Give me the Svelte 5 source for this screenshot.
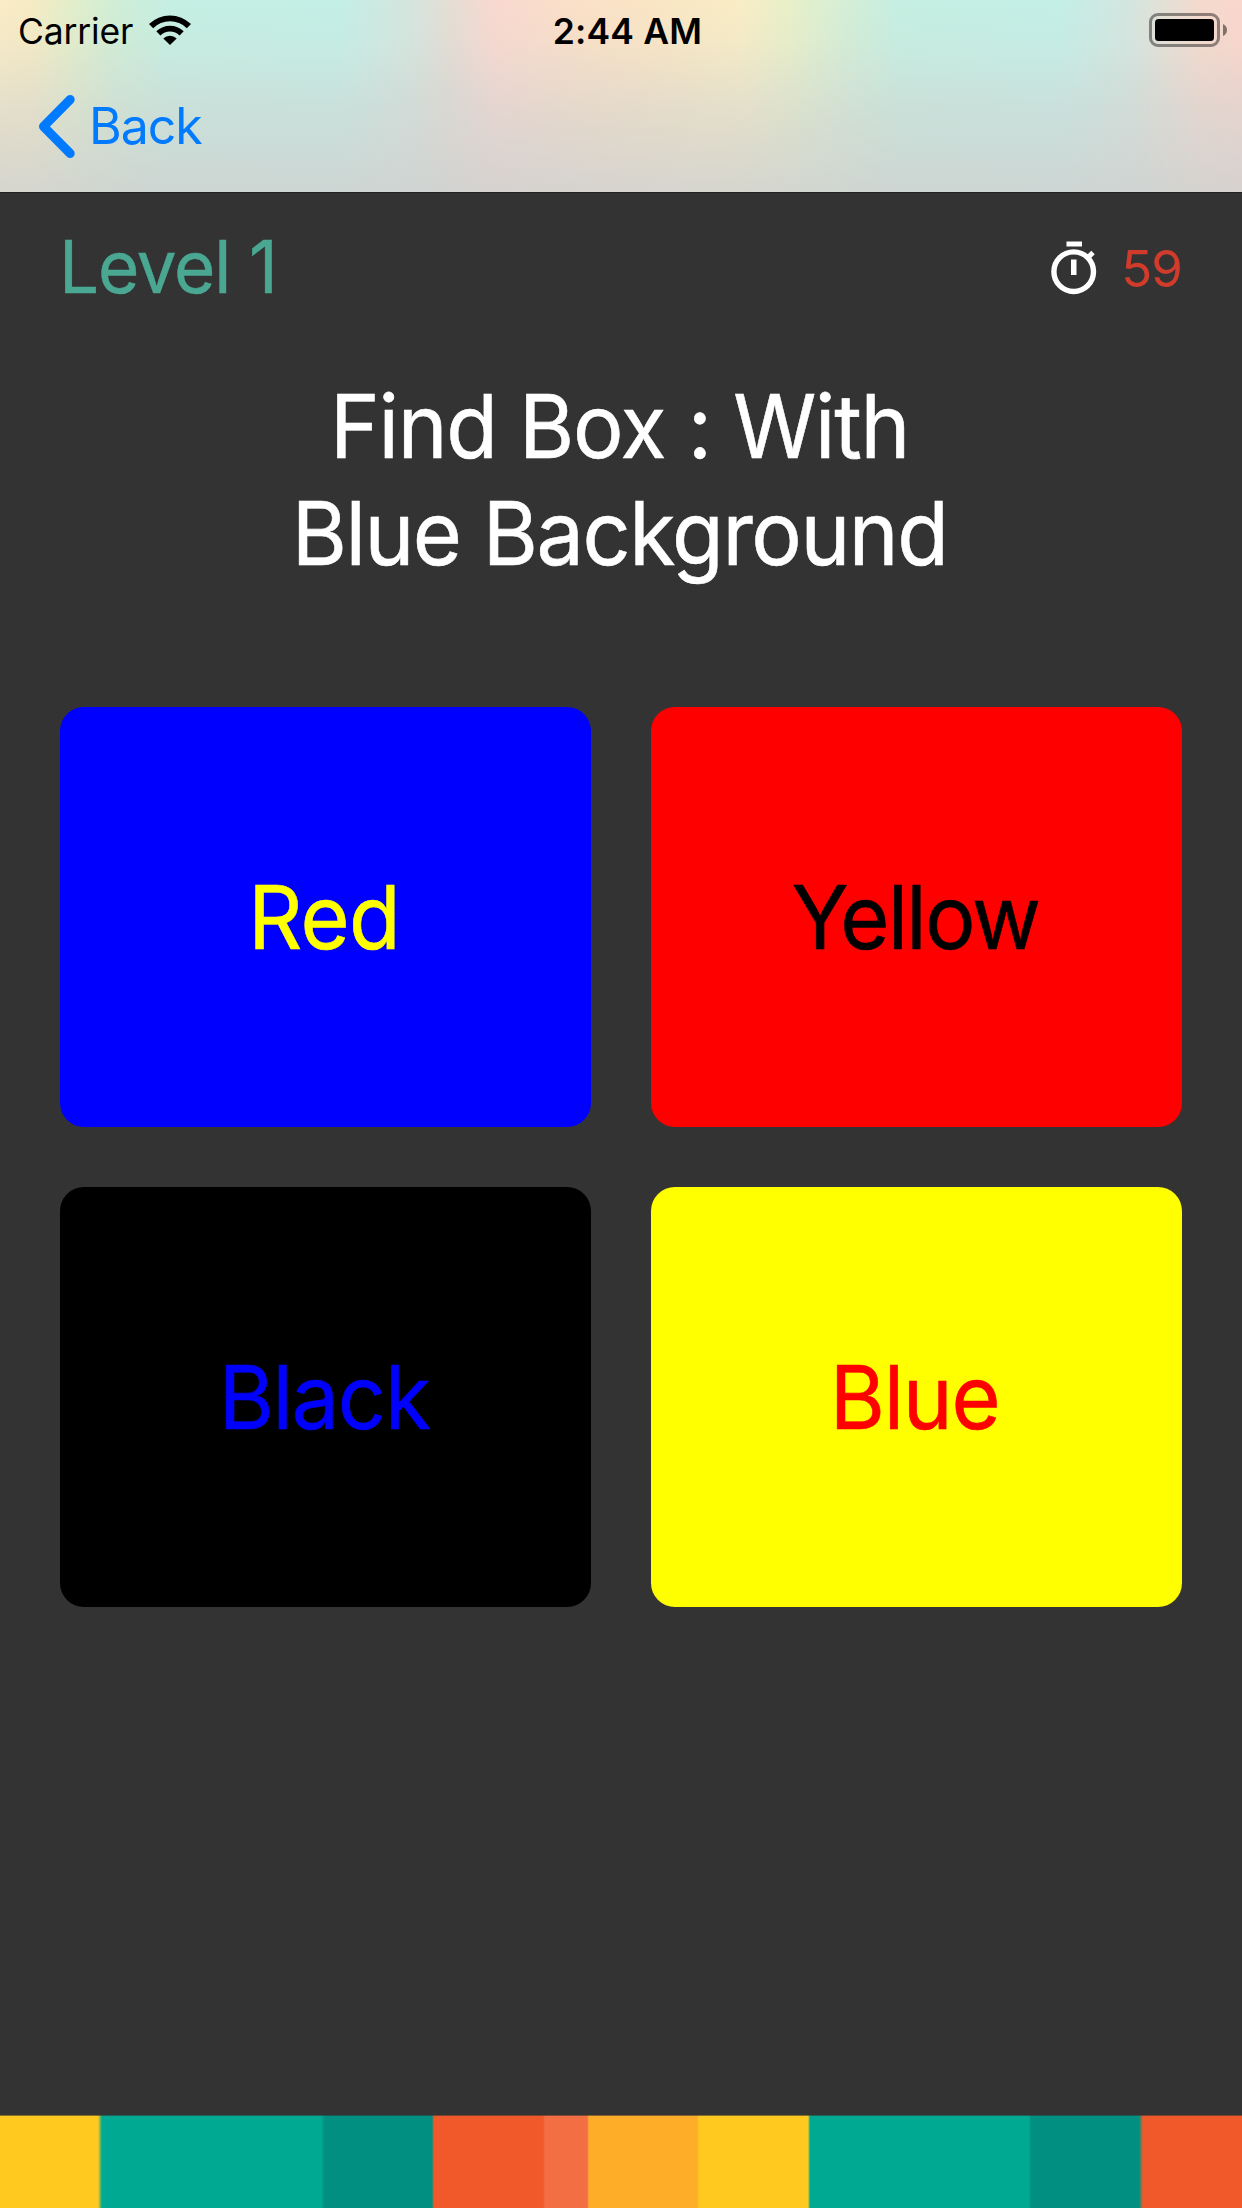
<script>
  const cards = [
    { label: 'Red', tone: 'on-blue' },
    { label: 'Yellow', tone: 'on-red' },
    { label: 'Black', tone: 'on-black' },
    { label: 'Blue', tone: 'on-yellow' },
  ];
</script>

<div class="screen">
  <header>
    <div class="status">
      <div class="carrier">
        <span class="carrier-name">Carrier</span>
        <svg class="wifi" width="42" height="30" viewBox="0 0 42 30">
          <path d="M0 9 A30 30 0 0 1 42 9 L37.8 13.2 A24 24 0 0 0 4.2 13.2 Z" />
          <path d="M7.3 16.3 A19.5 19.5 0 0 1 34.7 16.3 L30.6 20.4 A13.8 13.8 0 0 0 11.4 20.4 Z" />
          <path d="M14.3 23.4 A9.8 9.8 0 0 1 27.7 23.4 L21 30 Z" />
        </svg>
      </div>
      <span class="clock">2:44 AM</span>
      <svg class="battery" width="78" height="34" viewBox="0 0 78 34">
        <rect x="1.5" y="1.5" width="68" height="31" rx="7.5" fill="none" stroke="#000" stroke-opacity=".42" stroke-width="3" />
        <rect x="6" y="6" width="59" height="22" rx="3.5" />
        <path d="M74 11 Q78 13 78 17 Q78 21 74 23 Z" fill-opacity=".48" />
      </svg>
    </div>
    <nav>
      <svg width="37" height="63" viewBox="0 0 37 63">
        <path d="M32.2 4.5 L5.5 31.5 L32.2 58.5" fill="none" stroke="#007aff" stroke-width="9" stroke-linecap="round" stroke-linejoin="round" />
      </svg>
      <span class="back">Back</span>
    </nav>
  </header>
  <main>
    <div class="info">
      <span class="level">Level 1</span>
      <div class="timer">
        <svg width="46" height="54" viewBox="0 0 46 54">
          <path d="M15.5 0.5h15.5v5h-15.5zM20 18.5h5.5v15.5h-5.5z" fill="#fff" />
          <circle cx="22.7" cy="30.7" r="19.8" fill="none" stroke="#fff" stroke-width="5.4" />
          <path d="M35.5 18 L42 11.5" stroke="#fff" stroke-width="5" />
        </svg>
        <span class="seconds">59</span>
      </div>
    </div>
    <h1><span class="l1">Find Box : With</span><span class="l2">Blue Background</span></h1>
    <div class="cards">
      {#each cards as card}
        <button class="card {card.tone}"><span>{card.label}</span></button>
      {/each}
    </div>
  </main>
  <footer></footer>
</div>

<style>
  :global(body) { background: #333; }
  .screen {
    width: 1242px; height: 2208px; display: flex; flex-direction: column;
    overflow: hidden; background: #333; font-family: Inter, sans-serif;
  }
  header {
    height: 193px; box-sizing: border-box; flex: none;
    border-bottom: 1px solid #202222;
    background:
      linear-gradient(to bottom, rgba(207,209,208,0) 0, rgba(207,209,208,.1) 40px, rgba(207,209,208,.5) 110px, rgba(207,209,208,.84) 191px),
      linear-gradient(to right, #f9ecc6 0, #f6ebc4 30px, #e5eec9 65px, #d0eed6 115px, #c5efe3 170px, #c4efe6 340px, #d5e5de 412px, #e4ddd4 450px, #f9d9d0 495px, #fae0c7 580px, #fae6c4 660px, #f8edc5 740px, #e8f0c9 790px, #d4eed6 845px, #c5efe2 900px, #c4efe7 1060px, #d4e6df 1130px, #f5dacd 1200px, #fbd6cc 1242px);
  }
  .status {
    height: 63px; padding: 0 15px 0 18px; display: grid;
    grid-template-columns: 1fr auto 1fr; align-items: center;
  }
  .carrier { display: flex; align-items: center; }
  .carrier-name { font-size: 35.5px; line-height: 42px; letter-spacing: -.15px; }
  .wifi { margin-left: 16px; margin-bottom: 3px; }
  .clock { font-size: 35.5px; line-height: 42px; font-weight: 600; letter-spacing: .15px; margin-left: 10px; }
  .battery { justify-self: end; margin-bottom: 3px; }
  nav { display: flex; align-items: center; padding: 32px 0 0 38px; height: 63px; }
  .back { color: #007aff; font-size: 50px; line-height: 60px; margin: 0 0 2px 14px; letter-spacing: -1px; }
  main { height: 1922px; padding: 0 60px; box-sizing: border-box; flex: none; }
  .info { height: 149px; display: flex; align-items: center; justify-content: space-between; }
  .level {
    color: #4aa892; font-size: 73px; line-height: 88px; letter-spacing: -1.2px; margin: 0 0 2px -1px;
    transform: scaleX(.972); transform-origin: left; -webkit-text-stroke: .5px;
  }
  .timer { display: flex; align-items: center; gap: 24px; }
  .timer svg { margin-top: 0; }
  .seconds { color: #d03b2b; font-size: 51px; line-height: 60px; letter-spacing: -1px; margin-top: 2px; }
  h1 {
    margin: 31px 0 0; height: 214px; color: #fff; font-weight: 400; font-size: 88px;
    line-height: 107px; text-align: center; -webkit-text-stroke: .6px;
  }
  h1 span { display: block; transform: scaleX(.958); padding-right: 3px; }
  .l1 { letter-spacing: -1.3px; }
  .l2 { letter-spacing: -1.5px; }
  .cards {
    margin-top: 120px; display: grid; grid-template-columns: 531px 531px;
    grid-auto-rows: 420px; gap: 60px;
  }
  .card {
    border: 0; border-radius: 24px; padding: 0 3px 0 0; font: 400 88px/107px Inter, sans-serif;
    letter-spacing: -1.3px; -webkit-text-stroke: .6px;
  }
  .card span { display: inline-block; transform: scaleX(.958); }
  .on-blue { background: #00f; color: #ff0; letter-spacing: -.8px; }
  .on-red { background: #f00; color: #000; letter-spacing: -1.9px; }
  .on-black { background: #000; color: #00f; }
  .on-yellow { background: #ff0; color: #f00; }
  footer {
    flex: 1;
    background:
      linear-gradient(to bottom, rgba(51,51,51,.6) 1px, transparent 1px),
      linear-gradient(to right, #ffc91f 0 98px, #00a991 102px 321px, #008f80 325px 432px, #f2592a 434px 543px, #f46e43 545px 587px, #fdad27 589px 697px, #ffc91f 699px 808px, #00a991 810px 1029px, #008f80 1031px 1139px, #f2592a 1143px);
  }
</style>
